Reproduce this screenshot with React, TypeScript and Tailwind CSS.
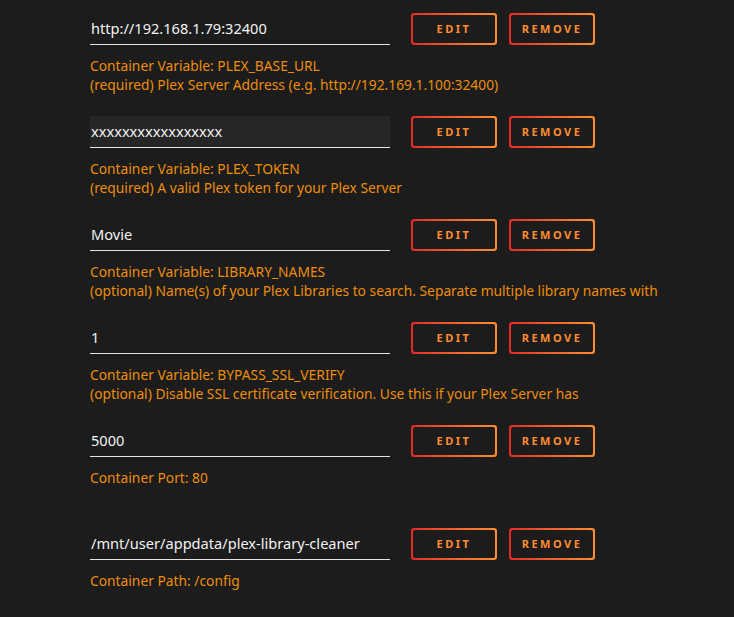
type Setting = {
  value: string
  lines: string[]
  masked?: boolean
}

const settings: Setting[] = [
  {
    value: 'http://192.168.1.79:32400',
    lines: [
      'Container Variable: PLEX_BASE_URL',
      '(required) Plex Server Address (e.g. http://192.169.1.100:32400)',
    ],
  },
  {
    value: 'xxxxxxxxxxxxxxxxx',
    masked: true,
    lines: ['Container Variable: PLEX_TOKEN', '(required) A valid Plex token for your Plex Server'],
  },
  {
    value: 'Movie',
    lines: [
      'Container Variable: LIBRARY_NAMES',
      '(optional) Name(s) of your Plex Libraries to search. Separate multiple library names with',
    ],
  },
  {
    value: '1',
    lines: [
      'Container Variable: BYPASS_SSL_VERIFY',
      '(optional) Disable SSL certificate verification. Use this if your Plex Server has',
    ],
  },
  {
    value: '5000',
    lines: ['Container Port: 80'],
  },
  {
    value: '/mnt/user/appdata/plex-library-cleaner',
    lines: ['Container Path: /config'],
  },
]

function GradientButton({ label }: { label: string }) {
  return (
    <button className="w-[86px] rounded-[3px] bg-gradient-to-r from-[#e22828] to-[#ff8c2f] p-[2px]">
      <span className="flex h-[28px] items-center justify-center rounded-[2px] bg-[#1c1c1c] text-[11px] font-bold tracking-[2.5px] text-[#ff8c2f]">
        {label}
      </span>
    </button>
  )
}

export default function App() {
  return (
    <div
      className="min-h-[617px] w-full overflow-hidden bg-[#1c1c1c] pl-[90px] pt-[13px]"
      style={{ fontFamily: '"Noto Sans", "Open Sans", sans-serif' }}
    >
      {settings.map((s) => (
        <div key={s.value} className="h-[103px]">
          <div className="flex items-start gap-[21px]">
            <div
              className={`flex h-[32px] w-[300px] items-center border-b border-[#e3e3e3] pl-[1px] text-[14.6px] text-[#f2f2f2] ${
                s.masked ? 'bg-[#262626]' : ''
              }`}
            >
              {s.value}
            </div>
            <div className="flex gap-[12px]">
              <GradientButton label="EDIT" />
              <GradientButton label="REMOVE" />
            </div>
          </div>
          <div className="mt-[11px] text-[13.8px] leading-[19px] text-[#ec8d0a]">
            {s.lines.map((l) => (
              <div key={l} className="whitespace-nowrap">
                {l}
              </div>
            ))}
          </div>
        </div>
      ))}
    </div>
  )
}
